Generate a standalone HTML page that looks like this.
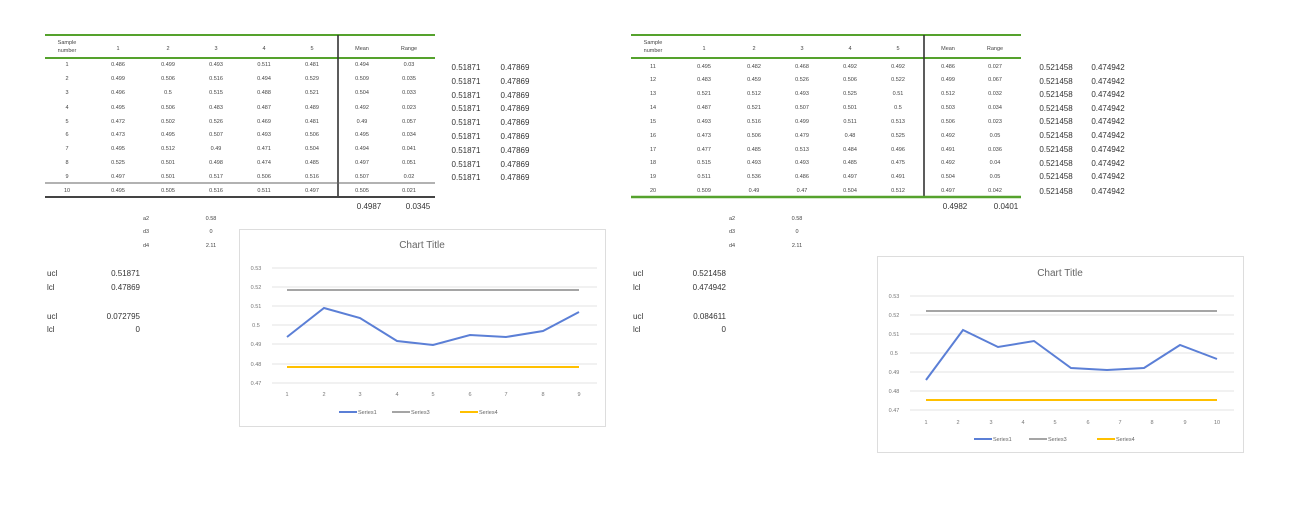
<!DOCTYPE html>
<html><head><meta charset="utf-8"><style>
html,body{margin:0;padding:0;background:#fff;width:1289px;height:511px;overflow:hidden}
svg text{font-family:"Liberation Sans",sans-serif;fill:#333}
.t text{font-size:5.5px;text-anchor:middle;fill:#444}
.e text{font-size:8px;text-anchor:middle;fill:#333}
.ax text{font-size:5.5px;fill:#777;text-anchor:middle}
</style></head><body>
<svg width="1289" height="511" viewBox="0 0 1289 511" xmlns="http://www.w3.org/2000/svg">
<!-- LEFT TABLE lines -->
<line x1="45" y1="35" x2="435" y2="35" stroke="#55a22d" stroke-width="2"/>
<line x1="45" y1="58" x2="435" y2="58" stroke="#55a22d" stroke-width="2"/>
<line x1="338" y1="35" x2="338" y2="198" stroke="#333" stroke-width="1.6"/>
<line x1="45" y1="183" x2="435" y2="183" stroke="#666" stroke-width="1"/>
<line x1="45" y1="197" x2="435" y2="197" stroke="#444" stroke-width="2"/>
<!-- RIGHT TABLE lines -->
<line x1="631" y1="35" x2="1021" y2="35" stroke="#55a22d" stroke-width="2"/>
<line x1="631" y1="58" x2="1021" y2="58" stroke="#55a22d" stroke-width="2"/>
<line x1="924" y1="35" x2="924" y2="198" stroke="#333" stroke-width="1.6"/>
<line x1="631" y1="197" x2="1021" y2="197" stroke="#55a22d" stroke-width="2.5"/>

<g class="t">
<text x="67" y="44">Sample</text><text x="67" y="52">number</text>
<text x="118" y="50">1</text><text x="168" y="50">2</text><text x="216" y="50">3</text><text x="264" y="50">4</text><text x="312" y="50">5</text><text x="362" y="50">Mean</text><text x="409" y="50">Range</text>
<text x="67" y="66">1</text><text x="118" y="66">0.486</text><text x="168" y="66">0.499</text><text x="216" y="66">0.493</text><text x="264" y="66">0.511</text><text x="312" y="66">0.481</text><text x="362" y="66">0.494</text><text x="409" y="66">0.03</text>
<text x="67" y="80">2</text><text x="118" y="80">0.499</text><text x="168" y="80">0.506</text><text x="216" y="80">0.516</text><text x="264" y="80">0.494</text><text x="312" y="80">0.529</text><text x="362" y="80">0.509</text><text x="409" y="80">0.035</text>
<text x="67" y="94">3</text><text x="118" y="94">0.496</text><text x="168" y="94">0.5</text><text x="216" y="94">0.515</text><text x="264" y="94">0.488</text><text x="312" y="94">0.521</text><text x="362" y="94">0.504</text><text x="409" y="94">0.033</text>
<text x="67" y="109">4</text><text x="118" y="109">0.495</text><text x="168" y="109">0.506</text><text x="216" y="109">0.483</text><text x="264" y="109">0.487</text><text x="312" y="109">0.489</text><text x="362" y="109">0.492</text><text x="409" y="109">0.023</text>
<text x="67" y="123">5</text><text x="118" y="123">0.472</text><text x="168" y="123">0.502</text><text x="216" y="123">0.526</text><text x="264" y="123">0.469</text><text x="312" y="123">0.481</text><text x="362" y="123">0.49</text><text x="409" y="123">0.057</text>
<text x="67" y="136">6</text><text x="118" y="136">0.473</text><text x="168" y="136">0.495</text><text x="216" y="136">0.507</text><text x="264" y="136">0.493</text><text x="312" y="136">0.506</text><text x="362" y="136">0.495</text><text x="409" y="136">0.034</text>
<text x="67" y="150">7</text><text x="118" y="150">0.495</text><text x="168" y="150">0.512</text><text x="216" y="150">0.49</text><text x="264" y="150">0.471</text><text x="312" y="150">0.504</text><text x="362" y="150">0.494</text><text x="409" y="150">0.041</text>
<text x="67" y="164">8</text><text x="118" y="164">0.525</text><text x="168" y="164">0.501</text><text x="216" y="164">0.498</text><text x="264" y="164">0.474</text><text x="312" y="164">0.485</text><text x="362" y="164">0.497</text><text x="409" y="164">0.051</text>
<text x="67" y="178">9</text><text x="118" y="178">0.497</text><text x="168" y="178">0.501</text><text x="216" y="178">0.517</text><text x="264" y="178">0.506</text><text x="312" y="178">0.516</text><text x="362" y="178">0.507</text><text x="409" y="178">0.02</text>
<text x="67" y="192">10</text><text x="118" y="192">0.495</text><text x="168" y="192">0.505</text><text x="216" y="192">0.516</text><text x="264" y="192">0.511</text><text x="312" y="192">0.497</text><text x="362" y="192">0.505</text><text x="409" y="192">0.021</text>

<text x="653" y="44">Sample</text><text x="653" y="52">number</text>
<text x="704" y="50">1</text><text x="754" y="50">2</text><text x="802" y="50">3</text><text x="850" y="50">4</text><text x="898" y="50">5</text><text x="948" y="50">Mean</text><text x="995" y="50">Range</text>
<text x="653" y="68">11</text><text x="704" y="68">0.495</text><text x="754" y="68">0.482</text><text x="802" y="68">0.468</text><text x="850" y="68">0.492</text><text x="898" y="68">0.492</text><text x="948" y="68">0.486</text><text x="995" y="68">0.027</text>
<text x="653" y="81">12</text><text x="704" y="81">0.483</text><text x="754" y="81">0.459</text><text x="802" y="81">0.526</text><text x="850" y="81">0.506</text><text x="898" y="81">0.522</text><text x="948" y="81">0.499</text><text x="995" y="81">0.067</text>
<text x="653" y="95">13</text><text x="704" y="95">0.521</text><text x="754" y="95">0.512</text><text x="802" y="95">0.493</text><text x="850" y="95">0.525</text><text x="898" y="95">0.51</text><text x="948" y="95">0.512</text><text x="995" y="95">0.032</text>
<text x="653" y="109">14</text><text x="704" y="109">0.487</text><text x="754" y="109">0.521</text><text x="802" y="109">0.507</text><text x="850" y="109">0.501</text><text x="898" y="109">0.5</text><text x="948" y="109">0.503</text><text x="995" y="109">0.034</text>
<text x="653" y="123">15</text><text x="704" y="123">0.493</text><text x="754" y="123">0.516</text><text x="802" y="123">0.499</text><text x="850" y="123">0.511</text><text x="898" y="123">0.513</text><text x="948" y="123">0.506</text><text x="995" y="123">0.023</text>
<text x="653" y="137">16</text><text x="704" y="137">0.473</text><text x="754" y="137">0.506</text><text x="802" y="137">0.479</text><text x="850" y="137">0.48</text><text x="898" y="137">0.525</text><text x="948" y="137">0.492</text><text x="995" y="137">0.05</text>
<text x="653" y="151">17</text><text x="704" y="151">0.477</text><text x="754" y="151">0.485</text><text x="802" y="151">0.513</text><text x="850" y="151">0.484</text><text x="898" y="151">0.496</text><text x="948" y="151">0.491</text><text x="995" y="151">0.036</text>
<text x="653" y="164">18</text><text x="704" y="164">0.515</text><text x="754" y="164">0.493</text><text x="802" y="164">0.493</text><text x="850" y="164">0.485</text><text x="898" y="164">0.475</text><text x="948" y="164">0.492</text><text x="995" y="164">0.04</text>
<text x="653" y="178">19</text><text x="704" y="178">0.511</text><text x="754" y="178">0.536</text><text x="802" y="178">0.486</text><text x="850" y="178">0.497</text><text x="898" y="178">0.491</text><text x="948" y="178">0.504</text><text x="995" y="178">0.05</text>
<text x="653" y="192">20</text><text x="704" y="192">0.509</text><text x="754" y="192">0.49</text><text x="802" y="192">0.47</text><text x="850" y="192">0.504</text><text x="898" y="192">0.512</text><text x="948" y="192">0.497</text><text x="995" y="192">0.042</text>

<text x="146" y="220">a2</text><text x="211" y="220">0.58</text>
<text x="146" y="233">d3</text><text x="211" y="233">0</text>
<text x="146" y="247">d4</text><text x="211" y="247">2.11</text>
<text x="732" y="220">a2</text><text x="797" y="220">0.58</text>
<text x="732" y="233">d3</text><text x="797" y="233">0</text>
<text x="732" y="247">d4</text><text x="797" y="247">2.11</text>
</g>

<g class="e">
<text x="466" y="70">0.51871</text><text x="515" y="70">0.47869</text>
<text x="466" y="84">0.51871</text><text x="515" y="84">0.47869</text>
<text x="466" y="98">0.51871</text><text x="515" y="98">0.47869</text>
<text x="466" y="111">0.51871</text><text x="515" y="111">0.47869</text>
<text x="466" y="125">0.51871</text><text x="515" y="125">0.47869</text>
<text x="466" y="139">0.51871</text><text x="515" y="139">0.47869</text>
<text x="466" y="153">0.51871</text><text x="515" y="153">0.47869</text>
<text x="466" y="167">0.51871</text><text x="515" y="167">0.47869</text>
<text x="466" y="180">0.51871</text><text x="515" y="180">0.47869</text>
<text x="1056" y="70">0.521458</text><text x="1108" y="70">0.474942</text>
<text x="1056" y="84">0.521458</text><text x="1108" y="84">0.474942</text>
<text x="1056" y="97">0.521458</text><text x="1108" y="97">0.474942</text>
<text x="1056" y="111">0.521458</text><text x="1108" y="111">0.474942</text>
<text x="1056" y="124">0.521458</text><text x="1108" y="124">0.474942</text>
<text x="1056" y="138">0.521458</text><text x="1108" y="138">0.474942</text>
<text x="1056" y="152">0.521458</text><text x="1108" y="152">0.474942</text>
<text x="1056" y="166">0.521458</text><text x="1108" y="166">0.474942</text>
<text x="1056" y="179">0.521458</text><text x="1108" y="179">0.474942</text>
<text x="1056" y="194">0.521458</text><text x="1108" y="194">0.474942</text>
<text x="369" y="209">0.4987</text><text x="418" y="209">0.0345</text>
<text x="955" y="209">0.4982</text><text x="1006" y="209">0.0401</text>
</g>

<g style="font-size:8px">
<text x="47" y="276">ucl</text><text x="140" y="276" text-anchor="end">0.51871</text>
<text x="47" y="290">lcl</text><text x="140" y="290" text-anchor="end">0.47869</text>
<text x="47" y="319">ucl</text><text x="140" y="319" text-anchor="end">0.072795</text>
<text x="47" y="332">lcl</text><text x="140" y="332" text-anchor="end">0</text>
<text x="633" y="276">ucl</text><text x="726" y="276" text-anchor="end">0.521458</text>
<text x="633" y="290">lcl</text><text x="726" y="290" text-anchor="end">0.474942</text>
<text x="633" y="319">ucl</text><text x="726" y="319" text-anchor="end">0.084611</text>
<text x="633" y="332">lcl</text><text x="726" y="332" text-anchor="end">0</text>
</g>

<!-- LEFT CHART -->
<rect x="239.5" y="229.5" width="366" height="197" fill="#fff" stroke="#ddd"/>
<text x="422" y="248" text-anchor="middle" style="font-size:10px;fill:#666">Chart Title</text>
<g stroke="#e3e3e3" stroke-width="1">
<line x1="272" y1="268" x2="597" y2="268"/><line x1="272" y1="287" x2="597" y2="287"/><line x1="272" y1="306" x2="597" y2="306"/><line x1="272" y1="325" x2="597" y2="325"/><line x1="272" y1="344" x2="597" y2="344"/><line x1="272" y1="364" x2="597" y2="364"/><line x1="272" y1="383" x2="597" y2="383"/>
</g>
<g class="ax">
<text x="256" y="270">0.53</text><text x="256" y="289">0.52</text><text x="256" y="308">0.51</text><text x="256" y="327">0.5</text><text x="256" y="346">0.49</text><text x="256" y="366">0.48</text><text x="256" y="385">0.47</text>
<text x="287" y="396">1</text><text x="324" y="396">2</text><text x="360" y="396">3</text><text x="397" y="396">4</text><text x="433" y="396">5</text><text x="470" y="396">6</text><text x="506" y="396">7</text><text x="543" y="396">8</text><text x="579" y="396">9</text>
</g>
<line x1="287" y1="290" x2="579" y2="290" stroke="#a5a5a5" stroke-width="2"/>
<line x1="287" y1="367" x2="579" y2="367" stroke="#ffc000" stroke-width="2"/>
<polyline fill="none" stroke="#5b7fd6" stroke-width="2" points="287,337 324,308 360,318 397,341 433,345 470,335 506,337 543,331 579,312"/>
<line x1="339" y1="412" x2="357" y2="412" stroke="#5b7fd6" stroke-width="2"/><text x="358" y="414" style="font-size:5.5px;fill:#666">Series1</text>
<line x1="392" y1="412" x2="410" y2="412" stroke="#a5a5a5" stroke-width="2"/><text x="411" y="414" style="font-size:5.5px;fill:#666">Series3</text>
<line x1="460" y1="412" x2="478" y2="412" stroke="#ffc000" stroke-width="2"/><text x="479" y="414" style="font-size:5.5px;fill:#666">Series4</text>

<!-- RIGHT CHART -->
<rect x="877.5" y="256.5" width="366" height="196" fill="#fff" stroke="#ddd"/>
<text x="1060" y="276" text-anchor="middle" style="font-size:10px;fill:#666">Chart Title</text>
<g stroke="#e3e3e3" stroke-width="1">
<line x1="910" y1="296" x2="1234" y2="296"/><line x1="910" y1="315" x2="1234" y2="315"/><line x1="910" y1="334" x2="1234" y2="334"/><line x1="910" y1="353" x2="1234" y2="353"/><line x1="910" y1="372" x2="1234" y2="372"/><line x1="910" y1="391" x2="1234" y2="391"/><line x1="910" y1="410" x2="1234" y2="410"/>
</g>
<g class="ax">
<text x="894" y="298">0.53</text><text x="894" y="317">0.52</text><text x="894" y="336">0.51</text><text x="894" y="355">0.5</text><text x="894" y="374">0.49</text><text x="894" y="393">0.48</text><text x="894" y="412">0.47</text>
<text x="926" y="424">1</text><text x="958" y="424">2</text><text x="991" y="424">3</text><text x="1023" y="424">4</text><text x="1055" y="424">5</text><text x="1088" y="424">6</text><text x="1120" y="424">7</text><text x="1152" y="424">8</text><text x="1185" y="424">9</text><text x="1217" y="424">10</text>
</g>
<line x1="926" y1="311" x2="1217" y2="311" stroke="#a5a5a5" stroke-width="2"/>
<line x1="926" y1="400" x2="1217" y2="400" stroke="#ffc000" stroke-width="2"/>
<polyline fill="none" stroke="#5b7fd6" stroke-width="2" points="926,380 963,330 998,347 1034,341 1071,368 1107,370 1144,368 1180,345 1217,359"/>
<line x1="974" y1="439" x2="992" y2="439" stroke="#5b7fd6" stroke-width="2"/><text x="993" y="441" style="font-size:5.5px;fill:#666">Series1</text>
<line x1="1029" y1="439" x2="1047" y2="439" stroke="#a5a5a5" stroke-width="2"/><text x="1048" y="441" style="font-size:5.5px;fill:#666">Series3</text>
<line x1="1097" y1="439" x2="1115" y2="439" stroke="#ffc000" stroke-width="2"/><text x="1116" y="441" style="font-size:5.5px;fill:#666">Series4</text>
</svg>
</body></html>
